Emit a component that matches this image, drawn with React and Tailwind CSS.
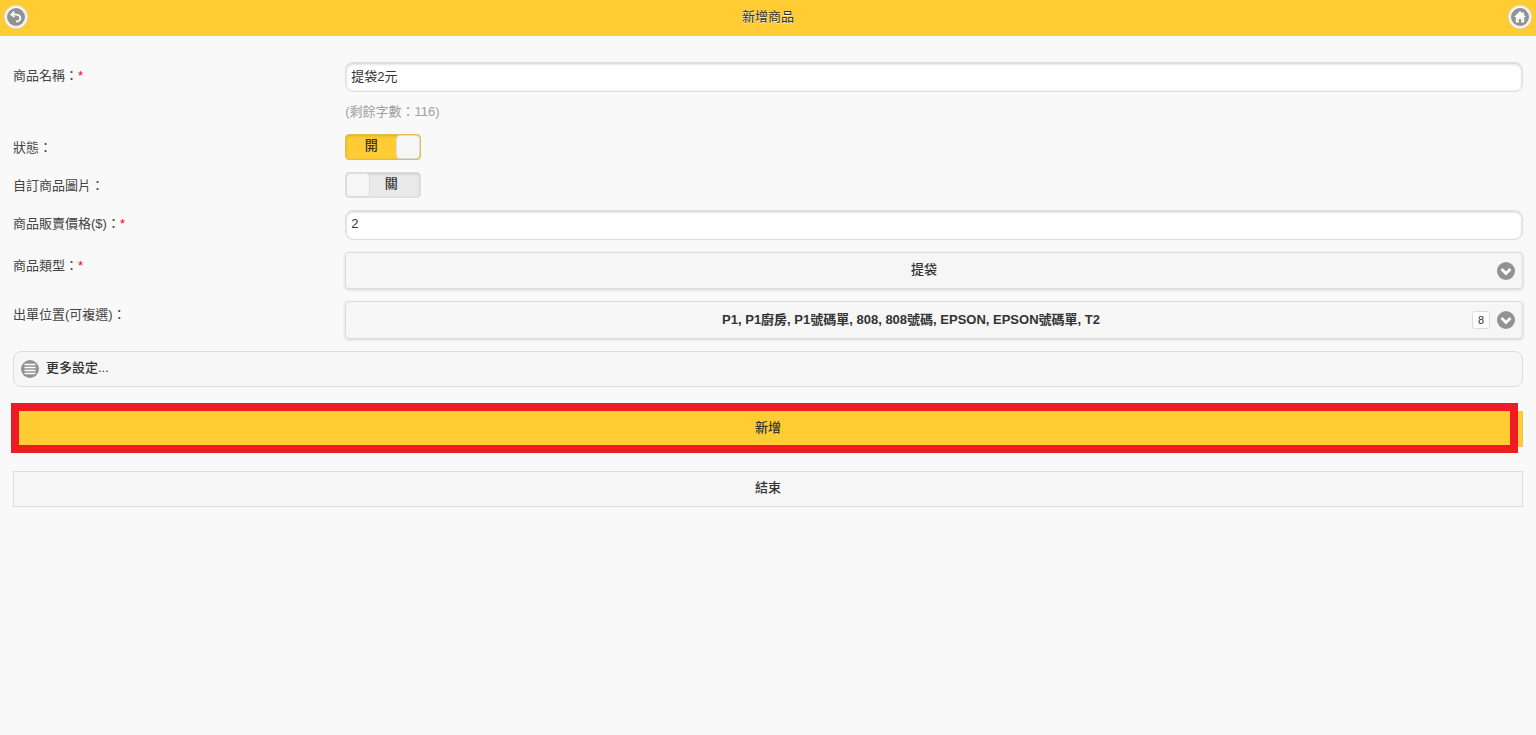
import { useState } from 'react'

const ICONS = {
  back: <path d="M5.2 1.6 2.4 4.6 5.6 7M3 4.6C7 4.2 11.3 4.4 11.3 8C11.3 10.4 9.6 11.5 7 11.5" fill="none" stroke="#fff" strokeWidth="1.8" />,
  home: <path d="M7 1 1 7H2.8V12.5H5.8V9H8.2V12.5H11.2V7H13L11 5V2.5H9.6V3.6Z" fill="#fff" />,
  down: <path d="M2.5 5 7 9.5 11.5 5" fill="none" stroke="#fff" strokeWidth="2.8" />,
  bars: <path d="M1.5 2.5h11M1.5 5.5h11M1.5 8.5h11M1.5 11.5h11" fill="none" stroke="#fff" strokeWidth="1.4" />,
}

function Icon({ name }) {
  return (
    <span className="flex size-[18px] shrink-0 items-center justify-center rounded-full bg-[#929292]">
      <svg viewBox="0 0 14 14" className="size-[14px]" aria-hidden="true">{ICONS[name]}</svg>
    </span>
  )
}

function HeaderButton({ icon, label }) {
  return (
    <button aria-label={label} className="flex size-6 items-center justify-center rounded-full border border-[#ddd] bg-[#f6f6f6]">
      <Icon name={icon} />
    </button>
  )
}

function Row({ id, label, required, children }) {
  return (
    <div className="flex items-start">
      <label htmlFor={id} className="w-[22%] shrink-0 pt-1 leading-5 text-[#444]">
        {label}：{required && <span className="text-[#f00]">*</span>}
      </label>
      <div className="min-w-0 flex-1">{children}</div>
    </div>
  )
}

function TextField(props) {
  return (
    <input
      type="text"
      className="block h-[30px] w-full rounded-lg border border-[#ddd] bg-white px-[5px] pb-1 shadow-[inset_0_1px_3px_rgba(0,0,0,0.2)]"
      {...props}
    />
  )
}

function Toggle({ id, defaultChecked }) {
  const [on, setOn] = useState(defaultChecked)
  return (
    <label
      className={
        'relative flex h-[26px] w-[76px] items-center rounded border font-medium shadow-[inset_0_1px_3px_rgba(0,0,0,0.15)] ' +
        (on ? 'border-[#e3bd4a] bg-[#fc3]' : 'flex-row-reverse border-[#ddd] bg-[#e9e9e9]')
      }
    >
      <input id={id} type="checkbox" role="switch" className="sr-only" checked={on} onChange={(e) => setOn(e.target.checked)} />
      <span className={'flex-1 pb-0.5 text-center leading-5 ' + (on ? '' : 'pr-2')}>{on ? '開' : '關'}</span>
      <span className="size-6 rounded border border-[#ddd] bg-[#f6f6f6]" />
    </label>
  )
}

export default function App() {
  const [name, setName] = useState('提袋2元')
  const [price, setPrice] = useState('2')

  return (
    <div className="min-h-screen bg-[#f9f9f9] font-['Liberation_Sans','Noto_Sans_CJK_TC',sans-serif] text-[13px] text-[#333]">
      <header className="flex h-9 items-center justify-between bg-[#fc3] px-1 pb-0.5">
        <HeaderButton icon="back" label="返回" />
        <h1 className="leading-5 [text-shadow:0_1px_0_#eee]">新增商品</h1>
        <HeaderButton icon="home" label="首頁" />
      </header>

      <main className="px-[13px] pt-[26px]">
        <form className="flex flex-col gap-3" onSubmit={(e) => e.preventDefault()}>
          <Row id="name" label="商品名稱" required>
            <TextField id="name" value={name} onChange={(e) => setName(e.target.value)} />
            <p className="mt-[10px] leading-5 text-[#a0a0a0]">(剩餘字數：{120 - name.length})</p>
          </Row>
          <Row id="status" label="狀態">
            <Toggle id="status" defaultChecked={true} />
          </Row>
          <Row id="custom-image" label="自訂商品圖片">
            <Toggle id="custom-image" defaultChecked={false} />
          </Row>
          <Row id="price" label="商品販賣價格($)" required>
            <TextField id="price" value={price} onChange={(e) => setPrice(e.target.value)} />
          </Row>
          <Row id="type" label="商品類型" required>
            <div className="relative">
              <select
                id="type"
                className="block h-[37px] w-full appearance-none rounded border border-[#ddd] bg-[#f6f6f6] pr-8 pl-3 pb-0.5 text-center font-medium shadow-[0_1px_3px_rgba(0,0,0,0.15)]"
              >
                <option>提袋</option>
              </select>
              <span className="pointer-events-none absolute inset-y-0 right-2 flex items-center">
                <Icon name="down" />
              </span>
            </div>
          </Row>
          <Row id="printers" label="出單位置(可複選)">
            <button
              id="printers"
              type="button"
              aria-haspopup="listbox"
              className="flex h-[38px] w-full items-center rounded border border-[#ddd] bg-[#f6f6f6] pr-[7px] pl-1 shadow-[0_1px_3px_rgba(0,0,0,0.15)]"
            >
              <span className="flex-1 truncate text-center font-bold">
                P1, P1廚房, P1號碼單, 808, 808號碼, EPSON, EPSON號碼單, T2
              </span>
              <span className="mr-[7px] rounded-[3px] border border-[#ddd] bg-white px-[5px] text-[11px] leading-4">8</span>
              <Icon name="down" />
            </button>
          </Row>

          <button type="button" className="flex h-9 items-center gap-[7px] rounded-lg border border-[#ddd] bg-[#f6f6f6] px-[7px] font-medium">
            <Icon name="bars" />
            <span className="pb-0.5">更多設定...</span>
          </button>

          <div className="relative mt-3">
            <button type="submit" className="block h-9 w-full border border-[#e8c860] bg-[#fc3] pb-0.5 font-medium">
              新增
            </button>
            <div className="pointer-events-none absolute -top-2 right-[5px] -bottom-1.5 -left-0.5 border-8 border-[#ed1c24]" />
          </div>

          <button type="button" className="mt-3 h-9 border border-[#ddd] bg-[#f6f6f6] pb-0.5 font-medium">
            結束
          </button>
        </form>
      </main>
    </div>
  )
}
